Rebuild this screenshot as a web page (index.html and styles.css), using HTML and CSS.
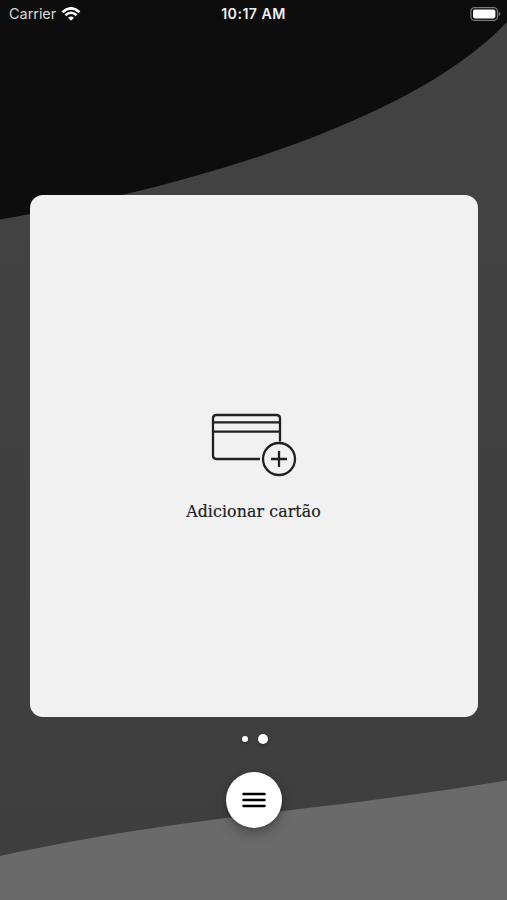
FILE: index.html
```html
<!DOCTYPE html>
<html lang="pt-BR">
<head>
<meta charset="utf-8">
<meta name="viewport" content="width=device-width, initial-scale=1">
<title>Cartões</title>
<link rel="stylesheet" href="styles.css">
</head>
<body>
<div class="screen">
  <svg class="backdrop" viewBox="0 0 507 900" aria-hidden="true">
    <path class="backdrop-top" d="M0 0H507V22C420 115 210 184 0 219.5Z"/>
    <path class="backdrop-bottom" d="M0 856C110 832 200 821 283 811C360 802 430 793 507 780.5V900H0Z"/>
  </svg>
  <header class="status">
    <div class="status-left">
      <span class="carrier">Carrier</span>
      <svg class="wifi" width="20" height="14" viewBox="0 0 20 14" aria-hidden="true">
        <path d="M1.500 5.200Q10-2.600 18.500 5.200M4.400 8.300Q10 3.200 15.600 8.300"/>
        <path class="wifi-dot" d="M7 10.700Q10 8.200 13 10.700L10 13.700Z"/>
      </svg>
    </div>
    <span class="time">10:17 AM</span>
    <svg class="battery" width="31" height="14" viewBox="0 0 31 14" aria-hidden="true">
      <rect class="battery-shell" x=".9" y=".7" width="26.6" height="12.6" rx="3.6"/>
      <rect class="battery-level" x="3" y="2.600" width="22.400" height="8.800" rx="1.800"/>
      <path class="battery-tip" d="M28.800 4.800Q30.400 5.600 30.400 7T28.800 9.200Z"/>
    </svg>
  </header>
  <main class="card">
    <svg class="card-icon" width="86" height="64" viewBox="0 0 86 64" aria-hidden="true">
      <path d="M49 46H5.500Q2 46 2 42.500V5.500Q2 2 5.500 2H65.500Q69 2 69 5.500V28.500M2 9.300H69M2 18.600H69"/>
      <circle cx="68" cy="46" r="16"/>
      <path d="M60 46H76M68 38V54"/>
    </svg>
    <span class="card-label">Adicionar cartão</span>
  </main>
  <div class="pager"><i class="dot"></i><i class="dot dot-active"></i></div>
  <button class="menu" aria-label="Menu">
    <svg width="24" height="16" viewBox="0 0 24 16" aria-hidden="true"><path d="M1.500 2H22.500M1.500 8H22.500M1.500 14H22.500"/></svg>
  </button>
</div>
</body>
</html>
```
FILE: styles.css
```css
* { box-sizing: border-box; }
body { margin: 0; }
.screen {
  position: relative;
  display: flex;
  flex-direction: column;
  align-items: center;
  width: 507px;
  height: 900px;
  overflow: hidden;
  background: linear-gradient(#434343, #3e3e3e);
}
.backdrop { position: absolute; inset: 0; width: 100%; height: 100%; }
.backdrop-top { fill: #0d0d0d; }
.backdrop-bottom { fill: #6a6a6a; }
.status {
  position: relative;
  display: grid;
  grid-template-columns: 1fr auto 1fr;
  align-items: center;
  width: 100%;
  height: 27px;
  padding: 0 6px 0 9px;
  color: #efefef;
  font: 14.5px/27px Inter, sans-serif;
}
.status-left { display: flex; align-items: center; gap: 5px; }
.carrier { color: #d7d7d7; letter-spacing: -.05px; }
.wifi { fill: none; stroke: #fff; stroke-width: 2.6; }
.wifi-dot { fill: #fff; stroke: none; }
.time { margin-right: 3px; font-size: 14.2px; font-weight: 600; letter-spacing: .45px; }
.battery { justify-self: end; }
.battery-shell { fill: none; stroke: #777; stroke-width: 1.3; }
.battery-level { fill: #fff; }
.battery-tip { fill: #777; }
.card {
  position: relative;
  display: flex;
  flex-direction: column;
  align-items: center;
  width: 448px;
  height: 522px;
  margin-top: 168px;
  padding-top: 218px;
  border-radius: 13px;
  background: #f1f1f1;
}
.card-icon { fill: none; stroke: #202020; stroke-width: 2.3; }
.card-label {
  margin-top: 21px;
  color: #202020;
  font: 17.5px/26px "Roboto Slab", "DejaVu Serif Condensed", "DejaVu Serif", serif;
  letter-spacing: .12px;
  -webkit-text-stroke: .2px #202020;
  white-space: nowrap;
}
.pager {
  position: relative;
  display: flex;
  align-items: center;
  gap: 10px;
  height: 10px;
  margin: 17px 0 0 2px;
}
.dot {
  width: 6px;
  height: 6px;
  border-radius: 50%;
  background: #fff;
  box-shadow: 0 2px 4px rgba(0, 0, 0, .25);
}
.dot-active { width: 10px; height: 10px; }
.menu {
  position: relative;
  display: flex;
  align-items: center;
  justify-content: center;
  width: 56px;
  height: 56px;
  margin-top: 27.5px;
  padding: 0;
  border: 0;
  border-radius: 50%;
  background: #fff;
  box-shadow: 0 6px 12px rgba(0, 0, 0, .25), 0 1px 4px rgba(0, 0, 0, .2);
}
.menu path { stroke: #000; stroke-width: 2.5; stroke-linecap: round; }
```
